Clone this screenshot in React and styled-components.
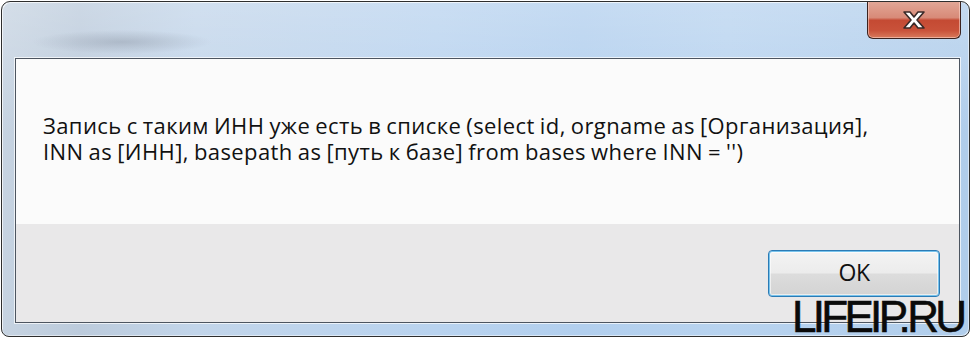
import React from "react";
import styled, { createGlobalStyle } from "styled-components";

const Global = createGlobalStyle`
  html, body { margin: 0; padding: 0; background: #ffffff; }
  #root { width: 974px; height: 338px; position: relative; overflow: hidden; }
`;

const Page = styled.div`
  width: 974px;
  height: 338px;
  padding: 1px 4px 1px 1px;
  box-sizing: border-box;
  position: relative;
`;

const Window = styled.div`
  width: 969px;
  height: 336px;
  box-sizing: border-box;
  border: 1px solid #2e2e2e;
  border-radius: 9px 9px 8px 8px;
  display: flex;
  flex-direction: column;
  overflow: hidden;
  background:
    linear-gradient(180deg, rgba(255,255,255,0.25) 0%, rgba(255,255,255,0) 40%),
    linear-gradient(90deg, #c6d3e1 0%, #bccbdc 8%, #c2d5ea 20%, #b9d3ef 45%, #b2cfee 60%, #b8d3ef 75%, #b0cdeb 100%);
  box-shadow: inset 1px 1px 0 rgba(255,255,255,0.7), inset -1px -1px 0 rgba(255,255,255,0.5);
`;

const TitleBar = styled.div`
  height: 56px;
  flex: none;
  display: flex;
  justify-content: flex-end;
  align-items: flex-start;
  padding-right: 8px;
  position: relative;
  background: radial-gradient(ellipse 90px 12px at 120px 40px, rgba(140,150,165,0.45), rgba(140,150,165,0) 100%);
`;

const CloseButton = styled.button`
  width: 94px;
  height: 38px;
  margin-top: -1px;
  box-sizing: border-box;
  border: 1px solid #3b2320;
  border-top: none;
  border-radius: 0 0 6px 6px;
  background: linear-gradient(180deg, #e2a898 0%, #d88a78 45%, #c44a33 52%, #c9523a 80%, #d87a5c 100%);
  box-shadow: inset 0 0 0 1px rgba(255,220,210,0.55);
  display: flex;
  align-items: center;
  justify-content: center;
  padding: 0;
`;

const ClientArea = styled.div`
  flex: 1;
  margin: 0 9px 13px 13px;
  border: 1px solid #4d5560;
  display: flex;
  flex-direction: column;
  background: #fbfbfb;
  box-shadow: 0 0 0 1px rgba(255,255,255,0.7);
`;

const MessagePane = styled.div`
  height: 165px;
  flex: none;
  background: #fbfbfb;
  box-sizing: border-box;
  padding: 53px 0 0 27px;
`;

const MessageText = styled.p`
  margin: 0;
  font-family: "Open Sans", "Noto Sans", sans-serif;
  font-size: 22px;
  line-height: 26px;
  color: #111;
  letter-spacing: 0.4px;
  word-spacing: -1px;
  white-space: nowrap;
`;

const ButtonBar = styled.div`
  flex: 1;
  background: #e9e8e9;
  display: flex;
  justify-content: flex-end;
  align-items: flex-start;
  padding: 26px 19px 0 0;
`;

const DialogButton = styled.button`
  width: 172px;
  height: 47px;
  box-sizing: border-box;
  border: 1px solid #2b7bb5;
  border-radius: 4px;
  background: linear-gradient(180deg, #f3f3f3 0%, #ececec 48%, #dcdcdc 52%, #d3d3d3 100%);
  box-shadow: inset 0 0 0 1px #78c3ec, inset 0 0 0 2px rgba(255,255,255,0.6);
  font-family: "Open Sans", "Noto Sans", sans-serif;
  font-size: 23px;
  color: #111;
  padding: 0 0 3px 0;
  letter-spacing: -0.5px;
`;

const Watermark = styled.div`
  position: absolute;
  left: 792px;
  top: 297px;
  font-family: "Liberation Sans", Arial, sans-serif;
  font-size: 44px;
  line-height: 40px;
  color: #0a0a0a;
  letter-spacing: -3.7px;
  padding-right: 4px;
  white-space: nowrap;
  -webkit-text-stroke: 0.6px #0a0a0a;
`;

function CloseGlyph() {
  return (
    <svg width="30" height="22" viewBox="0 0 30 22">
      <path
        d="M5 3 L11 3 L15 8 L19 3 L25 3 L18 11 L25 19 L19 19 L15 14 L11 19 L5 19 L12 11 Z"
        fill="#ffffff"
        stroke="#3a2a28"
        strokeWidth="1.6"
        strokeLinejoin="round"
      />
    </svg>
  );
}

export default function App() {
  return (
    <>
      <Global />
      <Page>
        <Window>
          <TitleBar>
            <CloseButton aria-label="Закрыть">
              <CloseGlyph />
            </CloseButton>
          </TitleBar>
          <ClientArea>
            <MessagePane>
              <MessageText>
                Запись с таким ИНН уже есть в списке (select id, orgname as [Организация],
                <br />
                INN as [ИНН], basepath as [путь к базе] from bases where INN = '')
              </MessageText>
            </MessagePane>
            <ButtonBar>
              <DialogButton>OK</DialogButton>
            </ButtonBar>
          </ClientArea>
        </Window>
        <Watermark>LIFEIP.RU</Watermark>
      </Page>
    </>
  );
}
